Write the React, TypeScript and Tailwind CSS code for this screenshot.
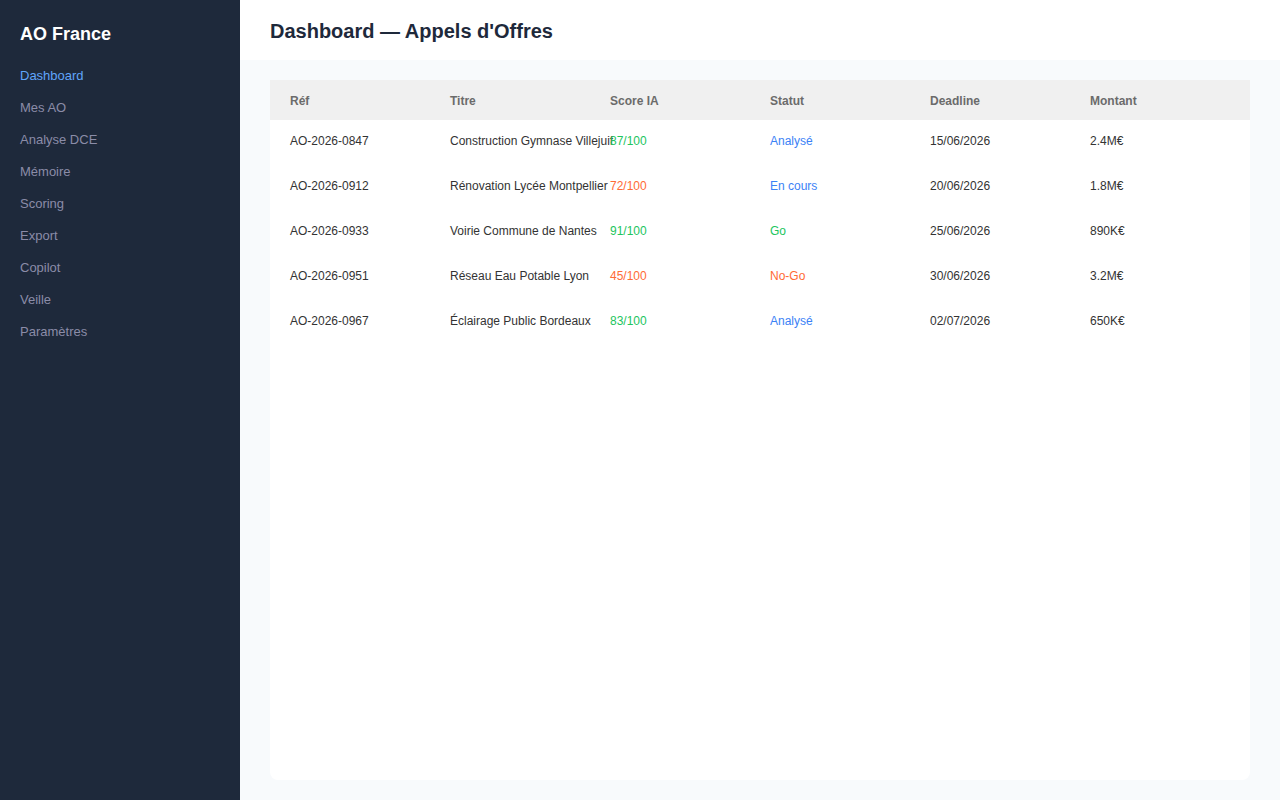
const nav = ["Dashboard", "Mes AO", "Analyse DCE", "Mémoire", "Scoring", "Export", "Copilot", "Veille", "Paramètres"];

const rows = [
  { ref: "AO-2026-0847", title: "Construction Gymnase Villejuif", score: "87/100", scoreColor: "text-[#22c55e]", status: "Analysé", statusColor: "text-[#3b82f6]", deadline: "15/06/2026", amount: "2.4M€" },
  { ref: "AO-2026-0912", title: "Rénovation Lycée Montpellier", score: "72/100", scoreColor: "text-[#ff6b35]", status: "En cours", statusColor: "text-[#3b82f6]", deadline: "20/06/2026", amount: "1.8M€" },
  { ref: "AO-2026-0933", title: "Voirie Commune de Nantes", score: "91/100", scoreColor: "text-[#22c55e]", status: "Go", statusColor: "text-[#22c55e]", deadline: "25/06/2026", amount: "890K€" },
  { ref: "AO-2026-0951", title: "Réseau Eau Potable Lyon", score: "45/100", scoreColor: "text-[#ff6b35]", status: "No-Go", statusColor: "text-[#ff6b35]", deadline: "30/06/2026", amount: "3.2M€" },
  { ref: "AO-2026-0967", title: "Éclairage Public Bordeaux", score: "83/100", scoreColor: "text-[#22c55e]", status: "Analysé", statusColor: "text-[#3b82f6]", deadline: "02/07/2026", amount: "650K€" },
];

const headers = ["Réf", "Titre", "Score IA", "Statut", "Deadline", "Montant"];

export default function App() {
  return (
    <div className="flex h-[800px] font-['Liberation_Sans',Arial,sans-serif]">
      <aside className="w-[240px] shrink-0 bg-[#1e293b] px-5 py-6">
        <div className="text-lg font-bold leading-5 text-white">AO France</div>
        <nav className="mt-4 flex flex-col">
          {nav.map((item, i) => (
            <div key={item} className={`h-8 text-[13px] leading-8 ${i === 0 ? "text-[#60a5fa]" : "text-[#8b8ca8]"}`}>
              {item}
            </div>
          ))}
        </nav>
      </aside>
      <main className="flex min-w-0 flex-1 flex-col bg-[#f8fafc]">
        <header className="flex h-[60px] items-center bg-white px-[30px] pt-0.5">
          <h1 className="text-xl font-bold text-[#1e293b]">Dashboard — Appels d'Offres</h1>
        </header>
        <div className="flex-1 px-[30px] py-5">
          <div className="h-full rounded-b-lg bg-white">
            <div className="grid h-10 grid-cols-[repeat(6,160px)] items-center bg-[#f0f0f0] pl-5 text-xs font-bold text-[#6b6b6b]">
              {headers.map((h) => (
                <div key={h} className="pt-px">{h}</div>
              ))}
            </div>
            {rows.map((r) => (
              <div key={r.ref} className="grid h-[45px] grid-cols-[repeat(6,160px)] items-center pb-1 pl-5 text-xs text-[#333333]">
                <div>{r.ref}</div>
                <div className="whitespace-nowrap">{r.title}</div>
                <div className={r.scoreColor}>{r.score}</div>
                <div className={r.statusColor}>{r.status}</div>
                <div>{r.deadline}</div>
                <div>{r.amount}</div>
              </div>
            ))}
          </div>
        </div>
      </main>
    </div>
  );
}
